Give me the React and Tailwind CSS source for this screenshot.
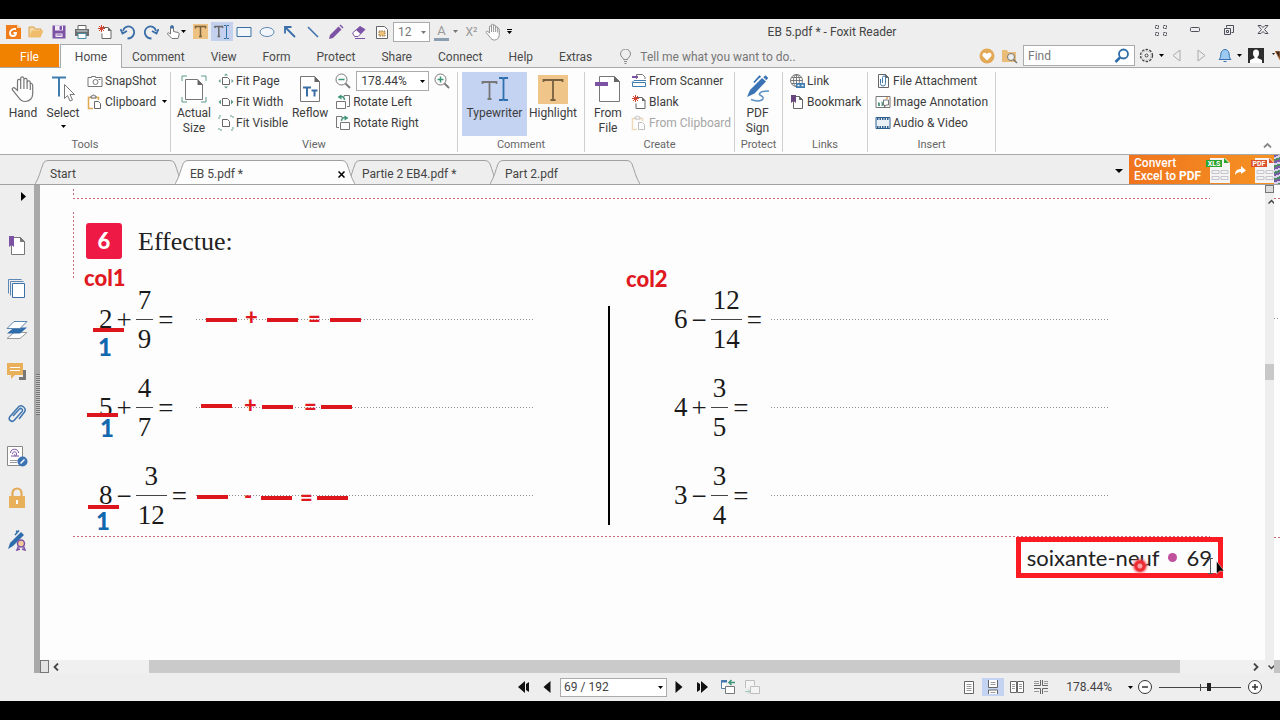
import React from 'react';

/* ---------- small shared pieces ---------- */

const Svg = ({ w = 16, h = 16, box, children, className = '' }) => (
  <svg
    width={w}
    height={h}
    viewBox={box || `0 0 ${w} ${h}`}
    fill="none"
    stroke="currentColor"
    className={`shrink-0 ${className}`}
    aria-hidden="true"
  >
    {children}
  </svg>
);

const Caret = ({ className = 'text-black' }) => (
  <Svg w={5} h={3} className={className}>
    <path d="M0 0h5L2.5 3z" fill="currentColor" stroke="none" />
  </Svg>
);

const PageShape = ({ fill = '#fff' }) => (
  <>
    <path d="M3.5 1.5h7l3 3v10h-10z" fill={fill} stroke="#666" />
    <path d="M10.5 1.5v3h3z" fill="#666" stroke="#666" />
  </>
);

/* ---------- icons ---------- */

const FoxitLogo = () => (
  <Svg>
    <path d="M1 1h11l4 3v11H1z" fill="#f07d1a" stroke="none" />
    <path d="M12 0l4 4h-4z" fill="#fbd2a8" stroke="none" />
    <path d="M11 5c-3-.6-6 1-6 4 0 2 1.400 3 3 3 2 0 3-1.400 3-3H8.500" stroke="#fff" strokeWidth="1.800" />
  </Svg>
);

const OpenIcon = () => (
  <Svg>
    <path d="M1 13V3h5l1 2h6v2" fill="#f6d9a4" stroke="#dca04c" />
    <path d="M1 13.500l3-7h11.500l-3 7z" fill="#f0bd6c" stroke="none" />
  </Svg>
);

const SaveIcon = () => (
  <Svg>
    <path d="M1.500 1.500h13v13h-13z" fill="#7c52a5" stroke="none" />
    <path d="M4 1.500h8v5H4zM4.500 9.500h7v3.500h-7z" fill="#f1eaf7" stroke="none" />
    <path d="M9 2.500h1.500v3H9zM5.500 11h5" fill="#7c52a5" stroke="#7c52a5" />
  </Svg>
);

const PrintIcon = () => (
  <Svg>
    <path d="M4 5V1.500h8V5" fill="#fff" stroke="#666" />
    <path d="M1 5h14v7H1z" fill="#6d6d6d" stroke="none" />
    <path d="M4 9.500h8v5H4z" fill="#fff" stroke="#4b8ea8" />
    <path d="M2.500 7h11" stroke="#d5e5ec" />
  </Svg>
);

const NewIcon = () => (
  <Svg>
    <path d="M6 3.500h5l3 3v8H5v-5" fill="#fff" stroke="#666" />
    <path d="M11 3v4h3.500z" fill="#666" stroke="none" />
    <path d="M4.500 1v7M1 4.500h7M2 2l5 5M7 2L2 7" stroke="#d5422f" />
  </Svg>
);

const UndoIcon = ({ flip }) => (
  <Svg className={flip ? '-scale-x-100' : ''}>
    <path d="M3 7c1-4 5-5.500 8-4s4 5 2.500 8-4 3.500-6 3.500" stroke="#3a6ea8" strokeWidth="1.800" />
    <path d="M.5 5l2 4.500L7 7" stroke="#3a6ea8" strokeWidth="1.800" />
  </Svg>
);

const TouchIcon = () => (
  <Svg w={14} h={16}>
    <path d="M4.500 10V3.500a1.500 1.500 0 013 0v4l4.500 1c1 .3 1.500 1 1 2.500l-1 3.500H6L1.500 10c-.5-1 1-1.800 3 0z" fill="#fff" stroke="#777" />
    <circle cx="6" cy="3" r="1.800" fill="#3a6ea8" stroke="none" />
  </Svg>
);

const HighlightSmall = () => (
  <Svg w={15} h={15}>
    <path d="M0 0h15v15H0z" fill="#eec283" stroke="none" />
    <path d="M2.500 4.500v-2h10v2M7.500 2.500v10M6 12.500h3" stroke="#77603f" strokeWidth="1.500" />
  </Svg>
);

const TypewriterSmall = () => (
  <Svg>
    <path d="M1 4V2.500h7.500V4M4.800 2.500v10M3.500 12.500h2.600" stroke="#666" strokeWidth="1.500" />
    <path d="M10 1.500h2l.5.500.5-.5h2M12.500 2v12M10 14.500h2l.5-.5.5.500h2" stroke="#2f6fae" />
  </Svg>
);

const RectIcon = () => (
  <Svg>
    <path d="M1 3.500h14v9H1z" fill="#f2f6fb" stroke="#3a6ea8" />
  </Svg>
);

const EllipseIcon = () => (
  <Svg>
    <ellipse cx="8" cy="8" rx="7" ry="4.500" fill="#f2f6fb" stroke="#5c86b4" />
  </Svg>
);

const ArrowIcon = () => (
  <Svg>
    <path d="M3.500 3.500L13 13M3 9.500V3h6.500" stroke="#3a6ea8" strokeWidth="1.800" />
  </Svg>
);

const LineIcon = () => (
  <Svg>
    <path d="M3 3l10 10" stroke="#3a6ea8" strokeWidth="1.500" />
  </Svg>
);

const PencilIcon = () => (
  <Svg>
    <path d="M1 15l1-4 8.500-8.500 3 3L5 14z" fill="#7c52a5" stroke="none" />
    <path d="M11.500 1.500l1-1 3 3-1 1z" fill="#7c52a5" stroke="none" />
  </Svg>
);

const EraserIcon = () => (
  <Svg>
    <path d="M1.500 9L9 2.500l5 3-7 7H3.500z" fill="#fff" stroke="#7c52a5" />
    <path d="M5 6l4-3.500 5 3L9.500 10z" fill="#7c52a5" stroke="none" />
    <path d="M4 14.500h10" stroke="#7c52a5" />
  </Svg>
);

const FieldIcon = () => (
  <Svg>
    <path d="M2.500 2.500h8l3 3v9h-11z" fill="#fff" stroke="#666" />
    <path d="M5 7h6v5H5z" fill="#f0c27a" stroke="#8a7550" strokeDasharray="1.500 1" />
  </Svg>
);

const HandIcon = ({ w = 16, h = 16 }) => (
  <Svg w={w} h={h} box="0 0 24 28">
    <path
      d="M6.500 15.500V6a1.600 1.600 0 013.200 0V3.500a1.600 1.600 0 013.200 0V5a1.600 1.600 0 013.200 0v2.500a1.500 1.500 0 013.200 0V8l1.200.5c1 .5 1.200 1 1.200 2V19c0 4-3 7.500-7.500 7.500-3 0-5-1.500-6.500-4L1.500 15c-1-1.800 1.200-3.200 2.800-1.500z"
      fill="#fff"
      stroke="#777"
      strokeWidth="1.200"
    />
    <path d="M9.700 6v8M12.900 5v9M16.100 7v7M19.300 8v7" stroke="#777" strokeWidth="1.200" />
  </Svg>
);

const SelectIcon = () => (
  <Svg w={24} h={28}>
    <path d="M1 2.500h14M8 2.500v19" stroke="#3f7cb0" strokeWidth="2" />
    <path d="M13.500 9.500v14l3-3 2.500 5.500 2.500-1-2.500-5.500h4.500z" fill="#fff" stroke="#777" />
  </Svg>
);

const CameraIcon = () => (
  <Svg>
    <path d="M1 4.500h3.500v-1h4v1H15v9H1z" fill="#fff" stroke="#777" />
    <circle cx="8.500" cy="9" r="2.500" stroke="#777" />
    <path d="M11.500 6.500h2" stroke="#777" />
  </Svg>
);

const ClipboardIcon = ({ faded }) => (
  <Svg className={faded ? 'opacity-40' : ''}>
    <path d="M6 14.500H1.500v-11h10V6" fill="#fff" stroke="#e0a850" strokeWidth="1.500" />
    <path d="M4 4V2h1.500l1-1.300L7.500 2H9v2z" fill="#fff" stroke="#666" />
    <path d="M7.500 7.500h4l2 2v5h-6z" fill="#fff" stroke="#666" />
  </Svg>
);

const ActualSizeIcon = () => (
  <Svg w={26} h={28}>
    <path d="M1 6V1h5M20 1h5v5M25 22v5h-5M6 27H1v-5" stroke="#5b9a8b" />
    <path d="M4.500 4.500h12l5 5v15h-17z" fill="#fff" stroke="#777" />
    <path d="M16.500 4v6H22z" fill="#666" stroke="none" />
  </Svg>
);

const FitIcon = ({ kind }) => (
  <Svg>
    <path d="M4.500 4.500h5l2 2v5h-7z" fill="#fff" stroke="#666" />
    {kind === 'page' && <path d="M6 2.500L8 .5l2 2zM6 13.500l2 2 2-2zM2.500 6l-2 2 2 2zM13.500 6l2 2-2 2z" fill="#5b9a8b" stroke="none" />}
    {kind === 'width' && <path d="M3 5.500L.5 8 3 10.500zM13 5.500L15.500 8 13 10.500z" fill="#5b9a8b" stroke="none" />}
    {kind === 'visible' && <path d="M1 4V1h3M12 1h3v3M15 12v3h-3M4 15H1v-3" stroke="#5b9a8b" strokeDasharray="2 1" />}
  </Svg>
);

const ReflowIcon = () => (
  <Svg w={22} h={28}>
    <path d="M1.500 1.500h14l5 5v20h-19z" fill="#fff" stroke="#777" />
    <path d="M15.500 1v6H21z" fill="#666" stroke="none" />
    <path d="M4 12.500h8M8 12.500v9M12.500 15.500h6M15.500 15.500v6" stroke="#3a6ea8" strokeWidth="2" />
  </Svg>
);

const ZoomIcon = ({ plus }) => (
  <Svg>
    <circle cx="6.500" cy="6.500" r="5.500" fill="#fff" stroke="#777" />
    <path d="M10.500 10.500l4.500 4.500" stroke="#777" strokeWidth="1.800" />
    <path d={plus ? 'M3.500 6.500h6M6.500 3.500v6' : 'M3.500 6.500h6'} stroke="#3c9478" strokeWidth="1.500" />
  </Svg>
);

const RotateIcon = ({ flip }) => (
  <Svg className={flip ? '-scale-x-100' : ''}>
    <path d="M9 3V1.500h5.500v11H12" stroke="#777" />
    <path d="M1.500 7.500h9v7h-9z" fill="#fff" stroke="#777" />
    <path d="M9.500 6c0-2.500-2-4-4.500-3.500" stroke="#3c9478" strokeWidth="1.400" />
    <path d="M6.500.5v5l-4-2.500z" fill="#3c9478" stroke="none" />
  </Svg>
);

const TypewriterIcon = () => (
  <Svg w={28} h={28}>
    <path d="M1.500 9V7h14v2M8.500 7v17M6.500 24h4" stroke="#777" strokeWidth="1.800" />
    <path d="M18 3h3.500l1 1 1-1H27M22.500 3.500v21M18 25h3.500l1-1 1 1H27" stroke="#2f6fae" strokeWidth="1.800" />
  </Svg>
);

const HighlightIcon = () => (
  <Svg w={30} h={29}>
    <path d="M0 0h30v29H0z" fill="#efc58a" stroke="none" />
    <path d="M5.500 7V5h19v2M15 5v20M12.500 25h5" stroke="#77603f" strokeWidth="1.800" />
  </Svg>
);

const FromFileIcon = () => (
  <Svg w={26} h={28}>
    <path d="M4.500 1.500h15l5 5v20h-20z" fill="#fff" stroke="#777" />
    <path d="M19 1v6h6z" fill="#666" stroke="none" />
    <path d="M0 7h13v4H0z" fill="#7c52a5" stroke="none" />
  </Svg>
);

const ScannerIcon = () => (
  <Svg>
    <path d="M5.500 6V1.500h6l2.500 2.500V6" fill="#fff" stroke="#777" />
    <path d="M1 4h6" stroke="#7c52a5" strokeWidth="2" />
    <path d="M1 9.500l2-2h12M1.500 9.500h13v4h-13z" fill="#fff" stroke="#3f7cb0" />
  </Svg>
);

const SignIcon = () => (
  <Svg w={24} h={28}>
    <path d="M1 22l3-7L16 3l4 3.500L8.500 18.500z" fill="#3a72b4" stroke="none" />
    <path d="M8 7.500l5.500-6 1 .7M18 3l1.500-1.500L21 3l-1.500 1.500" stroke="#3a72b4" strokeWidth="1.800" />
    <path d="M5 24.500c6 2.500 13 1.500 12-2-1-2.500-5-2-3-4.500 1-1.500 5-2 9-2" stroke="#5b8fc4" strokeWidth="1.500" />
  </Svg>
);

const LinkIcon = () => (
  <Svg>
    <circle cx="7.500" cy="7.500" r="6" fill="#fff" stroke="#777" />
    <path d="M1.500 7.500h12M7.500 1.500v12M2.500 4.500h10M2.500 10.500h10" stroke="#777" />
    <ellipse cx="7.500" cy="7.500" rx="3" ry="6" stroke="#777" />
    <path d="M7 10h9v5H7z" fill="#3f7cb0" stroke="none" />
    <path d="M8.500 12.500h2m2 0h2" stroke="#fff" strokeWidth="1.500" />
  </Svg>
);

const BookmarkIcon = () => (
  <Svg>
    <path d="M4.500 2.500h6l3 3v9h-9z" fill="#fff" stroke="#666" />
    <path d="M10.500 2.500v3h3z" fill="#666" stroke="#666" />
    <path d="M2 1h5v8L4.500 7 2 9z" fill="#68457f" stroke="none" />
  </Svg>
);

const AttachIcon = () => (
  <Svg>
    <PageShape />
    <path d="M5.500 6v4.500a2.500 2.500 0 005 0V4.500a1.500 1.500 0 00-3 0V10" stroke="#3f7cb0" />
  </Svg>
);

const ImageIcon = () => (
  <Svg>
    <path d="M1 2.500h14v11H1z" fill="#fff" stroke="#777" />
    <path d="M3 12V8l2 1v3zM6.500 12V7l2 2v3z" fill="#5b9a8b" stroke="none" />
    <path d="M8.500 6h5v5H11l-1.500 2V11h-1z" fill="#fff" stroke="#777" />
    <path d="M12 3v2" stroke="#e39a45" strokeWidth="1.500" />
  </Svg>
);

const VideoIcon = () => (
  <Svg>
    <path d="M1 2.500h14v11H1z" fill="#e9f1f7" stroke="#2f5f8e" />
    <path d="M2 4h12M2 12h12" stroke="#2f5f8e" strokeWidth="2" strokeDasharray="1.500 1" />
  </Svg>
);

/* ---------- title bar ---------- */

const QuickButton = ({ label, active, wide, children }) => (
  <button
    type="button"
    aria-label={label}
    className={`flex h-[19px] items-center justify-center ${wide ? 'w-[26px] gap-px' : 'w-[22px]'} ${active ? 'bg-[#c3d0ee]' : ''}`}
  >
    {children}
  </button>
);

const fileTools = [
  ['Foxit', FoxitLogo],
  ['Open', OpenIcon],
  ['Save', SaveIcon],
  ['Print', PrintIcon],
  ['New', NewIcon],
  ['Undo', UndoIcon],
];

const drawTools = [
  ['Rectangle', RectIcon],
  ['Ellipse', EllipseIcon],
  ['Arrow', ArrowIcon],
  ['Line', LineIcon],
  ['Pencil', PencilIcon],
  ['Eraser', EraserIcon],
  ['Text field', FieldIcon],
];

const WindowButton = ({ label, children }) => (
  <button type="button" aria-label={label} className="flex w-[34px] items-center justify-center text-[#4f4f5c]">
    {children}
  </button>
);

const TitleBar = () => (
  <header className="flex h-[25px] items-center">
    <div className="flex items-center pl-[2px]">
      <div className="flex items-center gap-px">
        {fileTools.map(([label, Icon]) => (
          <QuickButton key={label} label={label}>
            <Icon />
          </QuickButton>
        ))}
        <QuickButton label="Redo">
          <UndoIcon flip />
        </QuickButton>
        <QuickButton label="Touch mode" wide>
          <TouchIcon />
          <Caret />
        </QuickButton>
      </div>
      <QuickButton label="Highlight text">
        <HighlightSmall />
      </QuickButton>
      <QuickButton label="Typewriter tool" active>
        <TypewriterSmall />
      </QuickButton>
      <div className="flex items-center gap-px">
        {drawTools.map(([label, Icon]) => (
          <QuickButton key={label} label={label}>
            <Icon />
          </QuickButton>
        ))}
      </div>
      <div className="relative flex">
        <select aria-label="Font size" className="h-5 w-[37px] appearance-none border border-[#ababab] bg-white pl-1 text-[12px] leading-4 text-[#777]">
          <option>12</option>
        </select>
        <span className="pointer-events-none absolute top-[9px] right-1">
          <Caret className="text-[#777]" />
        </span>
      </div>
      <button type="button" aria-label="Font colour" className="ml-1 flex items-center gap-1">
        <span className="flex h-[18px] w-[15px] items-center justify-center border-b-[3px] border-[#8a9eb0] text-[13px] leading-none text-[#999]">A</span>
        <Caret className="text-[#777]" />
      </button>
      <button type="button" aria-label="Superscript" className="ml-1.5 w-[15px] text-[12px] text-[#999]">
        X²
      </button>
      <button type="button" aria-label="Hand tool" className="ml-1.5">
        <HandIcon w={16} h={18} />
      </button>
      <button type="button" aria-label="Customise toolbar" className="ml-1.5 flex flex-col items-center gap-px">
        <span className="h-px w-[5px] bg-black" />
        <Caret />
      </button>
    </div>
    <h1 className="flex-1 pl-2 text-center text-[12px] text-[#444]">EB 5.pdf * - Foxit Reader</h1>
    <div className="flex pb-1">
      <WindowButton label="Ribbon options">
        <Svg w={14} h={12}>
          <path d="M1.500 1.500h3v3h-3zM9.500 1.500h3v3h-3zM1.500 8.500h3v3h-3zM9.500 8.500h3v3h-3z" strokeDasharray="2 1" />
        </Svg>
      </WindowButton>
      <WindowButton label="Minimise">
        <Svg w={11} h={5}>
          <rect x=".5" y=".5" width="9" height="4" rx="1" />
        </Svg>
      </WindowButton>
      <WindowButton label="Restore">
        <Svg w={12} h={12}>
          <path d="M3.500 3.500v-2h7v7h-2M1.500 4.500h6v6h-6zM3.500 6.500h2v2h-2z" />
        </Svg>
      </WindowButton>
      <WindowButton label="Close">
        <Svg w={12} h={11}>
          <path d="M1 1.500h3l2 2 2-2h3l-3.500 4 3.500 4H8l-2-2-2 2H1l3.500-4z" />
        </Svg>
      </WindowButton>
    </div>
  </header>
);

/* ---------- menu row ---------- */

const menus = ['Comment', 'View', 'Form', 'Protect', 'Share', 'Connect', 'Help', 'Extras'];

const MenuRow = () => (
  <nav className="flex h-6 items-stretch border-b border-[#a9a9a9] text-[12px] text-[#4a4a4a]">
    <button type="button" className="w-[59px] bg-[#f08200] pt-[2px] text-white">
      File
    </button>
    <button type="button" className="-mb-px ml-px w-[62px] border border-b-0 border-[#a9a9a9] bg-[#fdfdfd] pt-px">
      Home
    </button>
    <div className="flex items-center gap-[26px] pt-[2px] pl-[10px]">
      {menus.map((name) => (
        <button key={name} type="button">
          {name}
        </button>
      ))}
    </div>
    <label className="flex flex-1 items-center gap-[9px] pt-[2px] pl-7">
      <Svg w={11} h={15} className="text-[#888]">
        <path d="M3.500 10.500C3.500 8.500.5 8 .5 5a5 5 0 0110 0c0 3-3 3.500-3 5.500zM4 12.500h3M4.500 14.500h2" />
      </Svg>
      <input type="text" placeholder="Tell me what you want to do.." className="w-full outline-none placeholder:text-[#777]" />
    </label>
    <div className="flex items-center">
      <button type="button" aria-label="Favourites">
        <Svg>
          <circle cx="8" cy="8" r="7.500" fill="#e3a956" stroke="none" />
          <path d="M8 12.500L4 8.500c-2-3 2-5.500 4-2.500 2-3 6-.5 4 2.500z" fill="#fff" stroke="none" />
        </Svg>
      </button>
      <button type="button" aria-label="Search in folder" className="ml-[7px]">
        <Svg>
          <path d="M0 2h5l1 2h8v10H0z" fill="#e9bc78" stroke="none" />
          <circle cx="9" cy="9" r="3.500" fill="#eee" stroke="#777" />
          <path d="M11.500 11.500l3.500 3.500" stroke="#777" strokeWidth="1.500" />
        </Svg>
      </button>
      <label className="ml-[5px] flex h-[21px] w-[112px] items-center justify-between border border-[#ababab] bg-white pr-1 pl-1">
        <input type="text" placeholder="Find" className="w-16 outline-none placeholder:text-[#777]" />
        <Svg>
          <circle cx="9.500" cy="6" r="4.500" stroke="#2c6ca8" strokeWidth="1.800" />
          <path d="M6 9.500L1.500 14" stroke="#2c6ca8" strokeWidth="2.500" />
        </Svg>
      </label>
      <button type="button" aria-label="Settings" className="ml-1 flex items-center gap-[5px]">
        <Svg w={15} h={15} className="text-[#444]">
          <circle cx="7.500" cy="7.500" r="6" strokeDasharray="2.500 1.300" strokeWidth="1.300" />
          <circle cx="7.500" cy="7.500" r="4.500" stroke="#aaa" strokeDasharray="1 1" />
          <circle cx="7.500" cy="7.500" r="1.500" />
        </Svg>
        <Caret />
      </button>
      <button type="button" aria-label="Previous result" className="ml-2">
        <Svg w={9} h={13} className="text-[#aaa]">
          <path d="M8 1v11L1 6.500z" />
        </Svg>
      </button>
      <button type="button" aria-label="Next result" className="ml-4">
        <Svg w={9} h={13} className="text-[#aaa]">
          <path d="M1 1v11l7-5.500z" />
        </Svg>
      </button>
      <button type="button" aria-label="Notifications" className="ml-3 flex items-center gap-[5px]">
        <Svg w={14} h={15}>
          <path d="M1 11.500c2-1.500 1.500-4 2-6.500.5-2 2-3.500 4-3.500s3.500 1.500 4 3.500c.5 2.500 0 5 2 6.500z" fill="#9ccaf0" stroke="#3a72b4" />
          <path d="M5.500 13.500h3" stroke="#3a72b4" />
        </Svg>
        <Caret />
      </button>
      <button type="button" aria-label="Account" className="ml-[6px] flex items-center gap-2">
        <Svg w={16} h={15}>
          <path d="M0 0h16v15H0z" fill="#2d2d2d" stroke="none" />
          <path d="M8 1.500c2 0 3 1.500 3 3.500s-.5 3-1.500 4v1l4.500 2V15H2v-3l4.500-2V9C5.500 8 5 7 5 5s1-3.500 3-3.500z" fill="#fff" stroke="none" />
        </Svg>
        <Svg w={8} h={10}>
          <path d="M0 2h3L1.500 4z" fill="#222" stroke="none" />
          <path d="M3 0h5v9z" fill="#3b2a22" stroke="#d98a4a" strokeWidth=".8" />
        </Svg>
      </button>
    </div>
  </nav>
);

/* ---------- ribbon ---------- */

const Group = ({ label, className = '', children }) => (
  <section className={`flex flex-col border-r border-[#cfcfcf] ${className}`}>
    <div className="flex h-[66px] shrink-0 items-start">{children}</div>
    <h2 className="text-center text-[11px] leading-[14px] text-[#666]">{label}</h2>
  </section>
);

const BigButton = ({ icon, lines, active, menu, className = '' }) => (
  <button
    type="button"
    className={`flex h-16 shrink-0 flex-col items-center pt-[3px] text-[12px] leading-[15px] text-[#3c3c3c] ${active ? 'bg-[#c5d3f3]' : ''} ${className}`}
  >
    <span className="flex h-[31px] items-start">{icon}</span>
    {lines.map((line) => (
      <span key={line}>{line}</span>
    ))}
    {menu && (
      <span className="pt-1">
        <Caret />
      </span>
    )}
  </button>
);

const SmallButton = ({ icon, label, menu, disabled }) => (
  <button
    type="button"
    disabled={disabled}
    className={`flex h-[21px] items-center gap-[2px] text-[12px] whitespace-nowrap ${disabled ? 'text-[#a5a5a5]' : 'text-[#3c3c3c]'}`}
  >
    {icon}
    {label}
    {menu && (
      <span className="pl-1">
        <Caret />
      </span>
    )}
  </button>
);

const Stack = ({ className = '', children }) => (
  <div className={`-mt-[2px] flex flex-col items-start ${className}`}>{children}</div>
);

const Ribbon = () => (
  <div className="flex h-[87px] border-b border-[#a9a9a9] bg-[#fdfdfd] pt-1 pb-[2px]">
    <Group label="Tools" className="w-[171px]">
      <BigButton icon={<HandIcon w={24} h={28} />} lines={['Hand']} className="ml-1 w-[38px]" />
      <BigButton icon={<SelectIcon />} lines={['Select']} menu className="w-[42px]" />
      <Stack className="pl-[3px]">
        <SmallButton icon={<CameraIcon />} label="SnapShot" />
        <SmallButton icon={<ClipboardIcon />} label="Clipboard" menu />
      </Stack>
    </Group>
    <Group label="View" className="w-[287px]">
      <BigButton icon={<ActualSizeIcon />} lines={['Actual', 'Size']} className="ml-1 w-[38px]" />
      <Stack className="pl-[5px]">
        <SmallButton icon={<FitIcon kind="page" />} label="Fit Page" />
        <SmallButton icon={<FitIcon kind="width" />} label="Fit Width" />
        <SmallButton icon={<FitIcon kind="visible" />} label="Fit Visible" />
      </Stack>
      <BigButton icon={<ReflowIcon />} lines={['Reflow']} className="ml-[2px] w-[40px]" />
      <Stack className="pl-[5px]">
        <div className="flex h-[21px] items-center gap-[5px]">
          <button type="button" aria-label="Zoom out">
            <ZoomIcon />
          </button>
          <div className="relative flex">
            <select aria-label="Zoom" className="h-5 w-[73px] appearance-none border border-[#ababab] bg-white pl-1 text-[12px] leading-4 text-[#3c3c3c]">
              <option>178.44%</option>
            </select>
            <span className="pointer-events-none absolute top-[9px] right-1">
              <Caret />
            </span>
          </div>
          <button type="button" aria-label="Zoom in">
            <ZoomIcon plus />
          </button>
        </div>
        <SmallButton icon={<RotateIcon />} label="Rotate Left" />
        <SmallButton icon={<RotateIcon flip />} label="Rotate Right" />
      </Stack>
    </Group>
    <Group label="Comment" className="w-[127px]">
      <BigButton icon={<TypewriterIcon />} lines={['Typewriter']} active className="ml-1 w-[65px]" />
      <BigButton icon={<HighlightIcon />} lines={['Highlight']} className="w-[52px]" />
    </Group>
    <Group label="Create" className="w-[150px]">
      <BigButton icon={<FromFileIcon />} lines={['From', 'File']} className="ml-1 w-[38px]" />
      <Stack className="pl-[4px]">
        <SmallButton icon={<ScannerIcon />} label="From Scanner" />
        <SmallButton icon={<NewIcon />} label="Blank" />
        <SmallButton icon={<ClipboardIcon faded />} label="From Clipboard" disabled />
      </Stack>
    </Group>
    <Group label="Protect" className="w-[48px]">
      <BigButton icon={<SignIcon />} lines={['PDF', 'Sign']} className="w-[45px]" />
    </Group>
    <Group label="Links" className="w-[85px]">
      <Stack className="pl-[6px]">
        <SmallButton icon={<LinkIcon />} label="Link" />
        <SmallButton icon={<BookmarkIcon />} label="Bookmark" />
      </Stack>
    </Group>
    <Group label="Insert" className="w-[128px]">
      <Stack className="pl-[7px]">
        <SmallButton icon={<AttachIcon />} label="File Attachment" />
        <SmallButton icon={<ImageIcon />} label="Image Annotation" />
        <SmallButton icon={<VideoIcon />} label="Audio &amp; Video" />
      </Stack>
    </Group>
    <div className="flex flex-1 items-end justify-end pr-2">
      <button type="button" aria-label="Collapse ribbon" className="pb-1">
        <Svg w={9} h={5} className="text-[#888]">
          <path d="M1 4.500l3.500-3.500L8 4.500" strokeWidth="1.800" />
        </Svg>
      </button>
    </div>
  </div>
);

/* ---------- document tabs ---------- */

const TabEdge = ({ right, active }) => (
  <Svg w={14} h={24} className={right ? '-scale-x-100' : ''}>
    <path d="M0 24C4 18 6 9 8 4c1-2.500 3-3.500 6-3.500V24z" fill={active ? '#fdfdfd' : '#eee'} stroke="none" />
    <path d="M0 24C4 18 6 9 8 4c1-2.500 3-3.500 6-3.500" stroke="#a0a0a0" />
  </Svg>
);

const Tab = ({ name, active, className }) => (
  <div role="tab" aria-selected={!!active} className={`relative flex h-6 ${active ? 'z-10 -mb-px' : ''} ${className}`}>
    <TabEdge active={active} />
    <div className={`flex flex-1 items-center justify-between border-t border-[#a0a0a0] pt-[3px] pl-px whitespace-nowrap ${active ? 'bg-[#fdfdfd]' : ''}`}>
      {name}
      {active && (
        <button type="button" aria-label="Close tab" className="relative z-10 -mr-1">
          <Svg w={7} h={7} className="text-black">
            <path d="M.5.500l6 6M6.500.5l-6 6" strokeWidth="1.500" />
          </Svg>
        </button>
      )}
    </div>
    <TabEdge right active={active} />
  </div>
);

const AdPage = ({ tag, color }) => (
  <Svg w={24} h={26}>
    <path d="M4 1h15l5 5v20H4z" fill="#f4f4f4" stroke="none" />
    <path d="M18 1l5 5h-5z" fill={color} stroke="none" />
    <path d="M0 3h16v7H0z" fill={color} stroke="none" />
    <path d="M6 13.500h7v3H6zM15 13.500h7v3h-7zM6 19.500h7v3H6zM15 19.500h7v3h-7z" stroke="#c4c4cc" />
    <text x="8" y="9" fill="#fff" stroke="none" fontSize="7" fontWeight="700" textAnchor="middle">
      {tag}
    </text>
  </Svg>
);

const TabStrip = () => (
  <div className="flex h-[30px] items-end border-b border-[#a0a0a0] text-[12px] text-[#444]">
    <div role="tablist" className="flex pl-[35px]">
      <Tab name="Start" className="w-[148px]" />
      <Tab name="EB 5.pdf *" active className="-ml-2 w-[180px]" />
      <Tab name="Partie 2 EB4.pdf *" className="-ml-2 w-[151px]" />
      <Tab name="Part 2.pdf" className="-ml-2 w-[150px]" />
    </div>
    <button type="button" aria-label="All tabs" className="mr-[6px] mb-[11px] ml-auto">
      <Svg w={8} h={4}>
        <path d="M0 0h8L4 4z" fill="#000" stroke="none" />
      </Svg>
    </button>
    <a href="#convert" className="flex h-full w-[145px] items-center gap-[5px] overflow-hidden bg-linear-to-r from-[#f0741e] to-[#f59322] pl-[5px] text-white">
      <span className="flex w-[78px] flex-col text-[12px] leading-[13px] font-medium whitespace-nowrap">
        <span>Convert</span>
        <span>
          Excel to <b>PDF</b>
        </span>
      </span>
      <AdPage tag="XLS" color="#2aa52f" />
      <Svg w={11} h={10}>
        <path d="M0 10c0-4 2-6 6-6V1l5 4.500L6 9V7C3 7 1.500 8 0 10z" fill="#fff" stroke="none" />
      </Svg>
      <AdPage tag="PDF" color="#d9532c" />
    </a>
    <span className="h-full w-[6px] bg-[repeating-linear-gradient(160deg,#7a5aa8_0_2px,#d8d0e8_2px_4px,#4d8a6a_4px_6px)]" />
  </div>
);

/* ---------- navigation panel ---------- */

const panels = [
  [
    'Bookmarks',
    <Svg w={18} h={20}>
      <path d="M3.500 1.500h9l4 4v13h-13z" fill="#fff" stroke="#777" />
      <path d="M12.500 1.500v4h4z" fill="#777" stroke="#777" />
      <path d="M1 0h5v11l-2.500-2L1 11z" fill="#7c52a5" stroke="none" />
    </Svg>,
  ],
  [
    'Pages',
    <Svg w={20} h={20}>
      <path d="M1.500 15.500v-14h13M3.500 17.500v-14h13" stroke="#5c86b4" />
      <path d="M5.500 5.500h12v14h-12z" fill="#fff" stroke="#3a72a8" />
    </Svg>,
  ],
  [
    'Layers',
    <Svg w={22} h={20}>
      <path d="M1 18.500h13l7-6H8z" fill="#fff" stroke="#999" />
      <path d="M1 13.500h13l7-6H8z" fill="#2f6cab" stroke="none" />
      <path d="M1 8.500h13l7-7H8z" fill="#fff" stroke="#5c86b4" />
    </Svg>,
  ],
  [
    'Comments',
    <Svg w={20} h={20}>
      <path d="M12 8h7v10h-7v-3h4v-3h-4z" fill="#777" stroke="none" />
      <path d="M0 1h16v12H8l-4 4v-4H0z" fill="#e9b05c" stroke="none" />
      <path d="M3 5.500h10M3 8.500h10" stroke="#fff" />
    </Svg>,
  ],
  [
    'Attachments',
    <Svg w={20} h={20}>
      <path d="M6 12l6.500-7c1.500-1.500 4 .5 2.500 2.500L7.500 16c-2.500 3-7 0-4.500-3.500L11 3.500C14-.5 20 4 17.500 8L12 15" stroke="#3f76b0" strokeWidth="1.500" />
    </Svg>,
  ],
  [
    'Signatures',
    <Svg w={22} h={22}>
      <path d="M1.500 1.500h15v19h-15z" fill="#fff" stroke="#888" />
      <path d="M4.500 8c0-5 8-5 8 0M6.500 9c0-3 4-3 4 0s-2 2-2 0M5 11h8" stroke="#7c52a5" />
      <path d="M4 15.500h8M4 17.500h7" stroke="#999" />
      <circle cx="16.500" cy="16.500" r="5" fill="#3a72b4" stroke="none" />
      <path d="M14.500 18.500l4-4" stroke="#fff" strokeWidth="1.500" />
    </Svg>,
  ],
  [
    'Security',
    <Svg w={18} h={22}>
      <path d="M4.500 10V6a4.500 4.500 0 019 0v4" stroke="#e3a956" strokeWidth="2.200" />
      <path d="M1 9h16v12H1z" fill="#e9b05c" stroke="none" />
      <path d="M9 13v4" stroke="#fff" strokeWidth="2" />
    </Svg>,
  ],
  [
    'Digital signatures',
    <Svg w={20} h={22}>
      <path d="M1 20l2-6L14 3l3 3L6 17z" fill="#2f6cab" stroke="none" />
      <path d="M8 6l4-4.500M11 3l-2-1" stroke="#2f6cab" strokeWidth="1.500" />
      <path d="M12 16l-2 5 3-1M16 16l2 5-3-1" stroke="#7c52a5" strokeWidth="1.500" />
      <circle cx="14" cy="14.500" r="3.500" fill="#f3c99a" stroke="#7c52a5" strokeWidth="1.500" />
    </Svg>,
  ],
];

const SidePanel = () => (
  <aside className="flex w-10 shrink-0">
    <div className="flex w-[34px] flex-col items-center bg-[#eee]">
      <button type="button" aria-label="Expand panel" className="flex h-10 w-full items-start justify-end pt-[7px] pr-2">
        <Svg w={5} h={9}>
          <path d="M0 0l5 4.500L0 9z" fill="#000" stroke="none" />
        </Svg>
      </button>
      {panels.map(([label, icon]) => (
        <button key={label} type="button" aria-label={label} className="flex h-[42px] w-full items-center justify-center">
          {icon}
        </button>
      ))}
    </div>
    <div className="flex flex-1 items-start bg-[#a9a9a9] pt-[189px]">
      <span className="ml-[2px] h-[41px] w-1 bg-[repeating-linear-gradient(#777_0_1px,#c4c4c4_1px_2px)]" />
    </div>
  </aside>
);

/* ---------- worksheet ---------- */

const dottedGray = 'bg-[repeating-linear-gradient(90deg,#8f8f8f_0_1px,transparent_1px_3px)]';
const dottedRed = 'bg-[repeating-linear-gradient(90deg,#c46a7c_0_2px,transparent_2px_4px)]';
const dottedRedDown = 'bg-[repeating-linear-gradient(#c46a7c_0_2px,transparent_2px_4px)]';

const leftSums = [
  { whole: '2', op: '+', top: '7', bottom: '9' },
  { whole: '5', op: '+', top: '4', bottom: '7' },
  { whole: '8', op: '−', top: '3', bottom: '12' },
];

const rightSums = [
  { whole: '6', op: '−', top: '12', bottom: '14' },
  { whole: '4', op: '+', top: '3', bottom: '5' },
  { whole: '3', op: '−', top: '3', bottom: '4' },
];

const Sum = ({ whole, op, top, bottom }) => (
  <li className="flex items-center">
    <span className="flex w-[97px] shrink-0 items-center gap-1 font-['Liberation_Serif',serif] text-[27px] leading-[38px] text-[#1a1a1a]">
      <span className="-mt-[2px]">{whole}</span>
      <span>{op}</span>
      <span className="flex flex-col items-center">
        <span>{top}</span>
        <span className="h-px w-full bg-[#444]" />
        <span className="px-[2px]">{bottom}</span>
      </span>
      <span className="pl-px">=</span>
    </span>
    <span className={`h-px flex-1 ${dottedGray}`} />
  </li>
);

const Sums = ({ items, className }) => (
  <ol className={`flex w-[436px] flex-col gap-[11px] ${className}`}>
    {items.map((sum) => (
      <Sum key={sum.whole} {...sum} />
    ))}
  </ol>
);

/* marks typed and drawn over the page by the teacher */
const Dash = ({ className }) => <span className={`absolute h-1 w-[31px] bg-[#dc161c] ${className}`} />;

const Note = ({ className, children }) => (
  <span className={`absolute font-['Lato',sans-serif] text-[22px] leading-6 font-black text-[#e0181f] ${className}`}>{children}</span>
);

const BlueOne = ({ className }) => (
  <span className={`absolute font-['Lato',sans-serif] text-[24px] leading-6 font-black text-[#1268ae] ${className}`}>1</span>
);

const Annotations = () => (
  <>
    <Note className="top-[81px] left-[44px]">col1</Note>
    <Note className="top-[82px] left-[586px]">col2</Note>

    <Dash className="top-[143px] left-[53px]" />
    <Dash className="top-[228px] left-[47px]" />
    <Dash className="top-[320px] left-[48px]" />
    <BlueOne className="top-[150px] left-[58px]" />
    <BlueOne className="top-[231px] left-[60px]" />
    <BlueOne className="top-[324px] left-[56px]" />

    <Dash className="top-[133px] left-[166px]" />
    <Note className="top-[120px] left-[205px]">+</Note>
    <Dash className="top-[133px] left-[227px]" />
    <Note className="top-[122px] left-[268px]">=</Note>
    <Dash className="top-[133px] left-[290px]" />

    <Dash className="top-[219px] left-[161px]" />
    <Note className="top-[208px] left-[204px]">+</Note>
    <Dash className="top-[220px] left-[222px]" />
    <Note className="top-[210px] left-[264px]">=</Note>
    <Dash className="top-[220px] left-[281px]" />

    <Dash className="top-[310px] left-[157px]" />
    <Note className="top-[299px] left-[204px]">-</Note>
    <Dash className="top-[311px] left-[221px]" />
    <Note className="top-[301px] left-[260px]">=</Note>
    <Dash className="top-[311px] left-[277px]" />
  </>
);

const Worksheet = () => (
  <article className="relative h-[475px] overflow-hidden bg-[#fdfdfd] pr-[55px] pl-[33px]">
    <div className={`h-2 w-px ${dottedRedDown} mt-1`} />
    <div className={`h-px ${dottedRed} mt-px`} />

    <section className="mt-[13px] flex">
      <div className={`h-[68px] w-px ${dottedRedDown}`} />
      <div className="flex-1">
        <h2 className="flex items-center gap-4 pt-[10px] pl-3 font-['Liberation_Serif',serif] text-[26px] leading-9 text-[#222]">
          <span className="flex h-9 w-9 items-center justify-center rounded-[3px] bg-[#ee1944] font-['Lato',sans-serif] text-[22px] font-black text-white">6</span>
          <span className="pt-[2px]">Effectue:</span>
        </h2>
        <div className="flex pt-[21px] pb-[2px] pl-[25px]">
          <Sums items={leftSums} />
          <div className="mt-[25px] ml-[73px] h-[219px] w-[2px] bg-black" />
          <Sums items={rightSums} className="ml-16" />
        </div>
      </div>
    </section>
    <div className={`h-px ${dottedRed}`} />

    <div className="-mr-[13px] flex justify-end">
      <div className="flex h-[41px] items-center border-[5px] border-[#fb1b22] px-[6px] font-['Lato',sans-serif] text-[22px] text-[#222]">
        soixante-neuf
        <span className="mx-[9px] h-[9px] w-[9px] rounded-full bg-[#c04f9c]" />
        69
      </div>
    </div>

    <Annotations />

    {/* click ripple and pointers */}
    <span className="absolute top-[372px] left-[1091px] h-[18px] w-[18px] rounded-full bg-[radial-gradient(circle,#f7a3a6_0_2px,#ee2b32_3px_5px,rgba(250,90,95,0.35)_7px,transparent_9px)]" />
    <span className="absolute top-[372px] left-[1168px]">
      <Svg w={16} h={18}>
        <path d="M0 1.500h5M0 16.500h5M2.500 1.500v15" stroke="#555" />
        <path d="M8.500 4v13l3-3H16z" fill="#000" stroke="#fff" strokeWidth=".5" />
      </Svg>
    </span>
  </article>
);

const ScrollBottom = () => (
  <div className="flex h-[13px] items-center bg-[#f0f0f0]">
    <span className="h-full w-[9px] border border-[#777] bg-[#e4e4e4]" />
    <button type="button" aria-label="Scroll left" className="ml-1">
      <Svg w={6} h={8} className="text-[#444]">
        <path d="M5 .5L1.500 4 5 7.500" strokeWidth="1.800" />
      </Svg>
    </button>
    <div className="h-full flex-1 pr-[73px] pl-[90px]">
      <div className="h-full bg-[#cacaca]" />
    </div>
    <button type="button" aria-label="Scroll right" className="mr-[6px]">
      <Svg w={6} h={8} className="text-[#444]">
        <path d="M1 .5L4.500 4 1 7.500" strokeWidth="1.800" />
      </Svg>
    </button>
  </div>
);

const ScrollRight = () => (
  <div className="flex w-[9px] shrink-0 flex-col items-end bg-[#eee]">
    <span className="h-2 w-full border border-[#777] bg-[#ddd]" />
    <button type="button" aria-label="Scroll up" className="flex h-[17px] items-center">
      <Svg w={6} h={5} className="text-[#444]">
        <path d="M.5 4.500l3-3 3 3" strokeWidth="1.500" />
      </Svg>
    </button>
    <span className="mt-[154px] h-4 w-full bg-[#c8c8c8]" />
    <button type="button" aria-label="Scroll down" className="mt-auto flex h-3 items-center">
      <Svg w={6} h={5} className="text-[#444]">
        <path d="M.5.500l3 3 3-3" strokeWidth="1.500" />
      </Svg>
    </button>
  </div>
);

/* ---------- status bar ---------- */

const NavArrow = ({ label, bar, back }) => (
  <button type="button" aria-label={label} className="flex w-[23px] justify-center">
    <Svg w={12} h={12} className={back ? '-scale-x-100' : ''}>
      <path d={bar ? 'M5 0l7 6-7 6zM1 1l3 2v6l-3 2z' : 'M2.500 0l7 6-7 6z'} fill="#111" stroke="none" />
    </Svg>
  </button>
);

const ViewMode = ({ label, active, children }) => (
  <button type="button" aria-label={label} className={`flex h-[18px] w-[22px] items-center justify-center text-[#666] ${active ? 'bg-[#c5d3f3]' : ''}`}>
    <Svg w={16} h={16}>{children}</Svg>
  </button>
);

const StatusBar = () => (
  <footer className="flex h-7 items-center bg-[#eee] pr-[17px] pl-[40%] text-[12px] text-[#444]">
    <NavArrow label="First page" bar back />
    <NavArrow label="Previous page" back />
    <div className="relative ml-[2px] flex">
      <select aria-label="Page" className="h-[19px] w-[107px] appearance-none border border-[#ababab] bg-white pl-[3px] text-[12px] leading-4">
        <option>69 / 192</option>
      </select>
      <span className="pointer-events-none absolute top-2 right-1">
        <Caret />
      </span>
    </div>
    <NavArrow label="Next page" />
    <NavArrow label="Last page" bar />
    <button type="button" aria-label="Previous view" className="ml-[7px]">
      <Svg>
        <path d="M7 1.500H1.500v8H5" fill="#fff" stroke="#5b7f9e" />
        <path d="M1 2.500h6" stroke="#3f76b0" strokeWidth="2" />
        <path d="M5.500 7.500h9v7h-9z" fill="#fff" stroke="#777" />
        <path d="M15 3.500H9m2.500-2.500L9 3.500 11.500 6" stroke="#3c9478" strokeWidth="1.500" />
      </Svg>
    </button>
    <button type="button" aria-label="Next view" className="ml-2" disabled>
      <Svg className="opacity-40">
        <path d="M1.500 9V1.500h9v5" fill="#fff" stroke="#777" />
        <path d="M6.500 7.500h9v7h-9z" fill="#fff" stroke="#777" />
        <path d="M1 12.500h5m-2-2l2 2-2 2" stroke="#3c9478" />
      </Svg>
    </button>
    <div className="ml-auto flex items-center gap-[2px]">
      <ViewMode label="Single page">
        <path d="M3.500 2.500h9v12h-9z" fill="#fff" />
        <path d="M5.500 5.500h5M5.500 7.500h5M5.500 9.500h5M5.500 11.500h5" stroke="#999" />
      </ViewMode>
      <ViewMode label="Continuous" active>
        <path d="M3.500 1v7.500h9V1M3.500 15v-4h9v4" fill="#fff" />
        <path d="M5.500 3.500h5M5.500 5.500h5M5.500 13.500h5" stroke="#999" />
      </ViewMode>
      <ViewMode label="Facing">
        <path d="M1.500 2.500h6v11h-6zM8.500 2.500h6v11h-6z" fill="#fff" />
        <path d="M3 5.500h3M3 7.500h3M3 9.500h3M10 5.500h3M10 7.500h3M10 9.500h3" stroke="#999" />
      </ViewMode>
      <ViewMode label="Continuous facing">
        <path d="M1 6.500h6.500V1M15 6.500H9.500V1M1 9.500h6.500V15M15 9.500H9.500V15" />
        <path d="M1 2.500h5M1 4.500h5M11 2.500h4M11 4.500h4M1 12.500h5M11 12.500h4" stroke="#999" />
      </ViewMode>
    </div>
    <button type="button" className="ml-[14px] flex items-center gap-4">
      178.44%
      <Caret />
    </button>
    <button type="button" aria-label="Zoom out" className="ml-1">
      <Svg className="text-[#333]">
        <circle cx="8" cy="8" r="6.500" fill="#fff" />
        <path d="M5 8h6" strokeWidth="1.500" />
      </Svg>
    </button>
    <input
      type="range"
      aria-label="Zoom level"
      defaultValue="61"
      className="mx-[6px] h-3 w-[82px] appearance-none bg-[linear-gradient(#444,#444),linear-gradient(#444,#444)] bg-[length:100%_1px,1px_7px] bg-center bg-no-repeat [&::-webkit-slider-thumb]:h-[8px] [&::-webkit-slider-thumb]:w-1 [&::-webkit-slider-thumb]:appearance-none [&::-webkit-slider-thumb]:bg-[#222]"
    />
    <button type="button" aria-label="Zoom in">
      <Svg className="text-[#333]">
        <circle cx="8" cy="8" r="6.500" fill="#fff" />
        <path d="M5 8h6M8 5v6" strokeWidth="1.500" />
      </Svg>
    </button>
  </footer>
);

const App = () => (
  <div className="min-h-screen bg-black py-[19px] font-['Roboto','Noto_Sans',sans-serif]">
    <div className="overflow-hidden bg-[#eee]">
      <TitleBar />
      <MenuRow />
      <Ribbon />
      <TabStrip />
      <main className="flex">
        <SidePanel />
        <div className="min-w-0 flex-1">
          <Worksheet />
          <ScrollBottom />
        </div>
        <ScrollRight />
        <div className="flex w-[6px] shrink-0 flex-col bg-[#fdfdfd] pt-[13px]">
          <span className={`h-px ${dottedRed}`} />
          <span className={`mt-[119px] h-px ${dottedGray}`} />
          <span className={`mt-[218px] h-px ${dottedRed}`} />
          <span className="mt-auto h-[13px] bg-[#c4c4c4]" />
        </div>
      </main>
      <StatusBar />
    </div>
  </div>
);

export default App;
